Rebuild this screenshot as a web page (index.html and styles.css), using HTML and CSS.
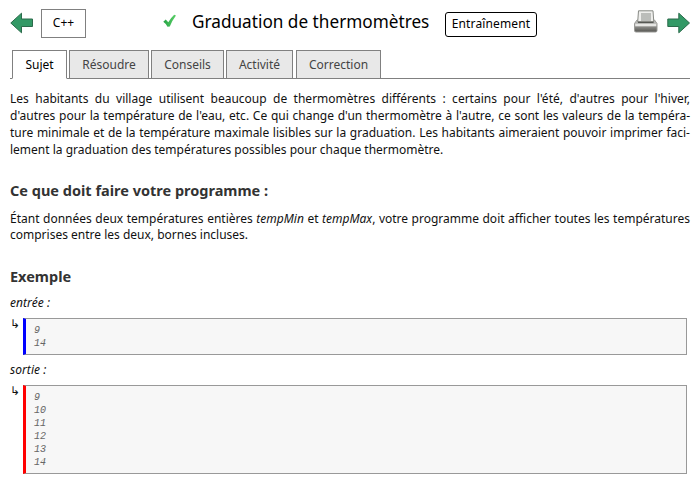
FILE: index.html
```html
<!DOCTYPE html>
<html lang="fr">
<head>
<meta charset="utf-8">
<title>Graduation de thermomètres</title>
<link rel="stylesheet" href="styles.css">
</head>
<body>
<header class="header">
  <svg class="arrow" viewBox="0 0 24 22"><path d="M.8 11 11.5 1.2V7H22.5V14.5H11.5V20.8Z" fill="#339966" stroke="#2b6b4b"/></svg>
  <a class="language">C++</a>
  <div class="heading">
    <svg class="check" viewBox="0 0 14 14"><defs><linearGradient id="g" x2="1"><stop stop-color="#25a244"/><stop offset="1" stop-color="#5bd068"/></linearGradient></defs><path d="M.3 7.7 2.7 5.6 5.3 8.3Q8 3.5 11.2.7L13 1.4Q9.4 6 6.8 12.4L4.5 12.7Q3 9.6.3 7.7Z" fill="url(#g)"/></svg>
    <h1 class="title">Graduation de thermomètres</h1>
    <span class="badge">Entraînement</span>
  </div>
  <svg class="printer" viewBox="0 0 26 25">
    <defs><linearGradient id="p" x2="0" y2="1"><stop stop-color="#d0d0ce"/><stop offset="1" stop-color="#555551"/></linearGradient></defs>
    <path d="M4 11 1.5 14.5V21.5Q1.5 23 3 23H22.5Q24 23 24 21.5V14.5L21.5 11Z" fill="url(#p)" stroke="#999996"/>
    <path d="M5.5 1.8H20L20.8 13H4.7Z" fill="#eeeeec" stroke="#888a85"/>
    <path d="M8 4H18V12H8Z" fill="#bbbdba"/>
    <path d="M5 13.3H20.5" stroke="#555753" stroke-width="1.6"/>
    <path d="M2.2 16H23.3" stroke="#e6e6e4" stroke-width="2.6"/>
  </svg>
  <svg class="arrow" viewBox="0 0 24 22"><path d="M22.5 11 11.8 1.2V7H.8V14.5H11.8V20.8Z" fill="#339966" stroke="#2b6b4b"/></svg>
</header>
<nav class="tabs">
  <a class="tab tab-active">Sujet</a>
  <a class="tab tab-solve">Résoudre</a>
  <a class="tab tab-hints">Conseils</a>
  <a class="tab tab-activity">Activité</a>
  <a class="tab tab-correction">Correction</a>
</nav>
<main class="content">
  <div class="text intro">
    <div class="line">Les habitants du village utilisent beaucoup de thermomètres différents : certains pour l'été, d'autres pour l'hiver,</div>
    <div class="line">d'autres pour la température de l'eau, etc. Ce qui change d'un thermomètre à l'autre, ce sont les valeurs de la tempéra-</div>
    <div class="line">ture minimale et de la température maximale lisibles sur la graduation. Les habitants aimeraient pouvoir imprimer faci-</div>
    <div class="line last">lement la graduation des températures possibles pour chaque thermomètre.</div>
  </div>
  <h2 class="subtitle">Ce que doit faire votre programme :</h2>
  <div class="text task">
    <div class="line">Étant données deux températures entières <i>tempMin</i> et <i>tempMax</i>, votre programme doit afficher toutes les températures</div>
    <div class="line last">comprises entre les deux, bornes incluses.</div>
  </div>
  <h2 class="subtitle example-title">Exemple</h2>
  <div class="label">entrée :</div>
  <div class="sample"><span class="hook">↳</span><pre class="code input">9
14</pre></div>
  <div class="label output-label">sortie :</div>
  <div class="sample"><span class="hook">↳</span><pre class="code output">9
10
11
12
13
14</pre></div>
</main>
</body>
</html>
```
FILE: styles.css
```css
* { box-sizing: border-box; }
body {
  margin: 0;
  height: 480px;
  overflow: hidden;
  background: #fff;
  color: #111;
  font: 12px/17px "Noto Sans", sans-serif;
}
.header {
  display: flex;
  height: 50px;
  padding: 0 5px 0 10px;
  color: #000;
}
.header svg { flex: none; }
.arrow { width: 24px; height: 22px; margin-top: 12px; }
.language {
  width: 45px;
  height: 29px;
  margin: 9px 0 0 7px;
  border: 1px solid #808080;
  line-height: 26px;
  text-align: center;
}
.heading { display: flex; flex: 1; padding-left: 77px; }
.check { width: 14px; height: 14px; margin-top: 14px; }
.title {
  width: 238px;
  margin: 7px 0 0 15px;
  font-size: 17.2px;
  line-height: 29px;
  font-weight: 400;
  white-space: nowrap;
}
.badge {
  width: 92px;
  height: 25px;
  margin: 12px 0 0 15px;
  border: 1px solid #000;
  border-radius: 3px;
  line-height: 22px;
  letter-spacing: 0.15px;
  text-align: center;
  white-space: nowrap;
}
.printer { width: 26px; height: 25px; margin: 9px 8px 0 0; }
.tabs {
  display: flex;
  gap: 2px;
  height: 29px;
  margin: 0 6px 0 10px;
  padding-left: 2px;
  background: linear-gradient(#808080, #808080) 0 28px / 100% 1px no-repeat;
}
.tab {
  width: 80px;
  height: 29px;
  border: 1px solid #808080;
  background: #e8e8e8;
  color: #444;
  line-height: 27px;
  text-align: center;
}
.tab-active { width: 55px; border-bottom-color: #fff; background: #fff; color: #000; }
.tab-hints { width: 73px; }
.tab-activity { width: 67px; }
.tab-correction { width: 85px; margin-left: 1px; }
.content { padding: 11px 6px 0 10px; }
.line { text-align-last: justify; white-space: nowrap; }
.last { text-align-last: left; }
.subtitle { margin: 23px 0 0; color: #333; font-size: 14.5px; line-height: 18px; }
.task { margin-top: 12px; line-height: 16px; }
.example-title { margin-top: 24px; }
.label { height: 17px; margin-top: 9px; font-style: italic; letter-spacing: 0.05px; }
.output-label { margin-top: 6px; }
.sample { display: flex; margin-top: 7px; padding-right: 3px; }
.hook { width: 13px; height: 17px; line-height: 12px; }
.code {
  flex: 1;
  margin: 0;
  padding: 5px 8px 3px;
  border: 1px solid #999;
  border-left: 3px solid blue;
  background: #f7f7f7;
  color: #666;
  font: italic 10px/13px "Liberation Mono", monospace;
}
.input { height: 37px; }
.output { height: 89px; border-left-color: red; }
```
